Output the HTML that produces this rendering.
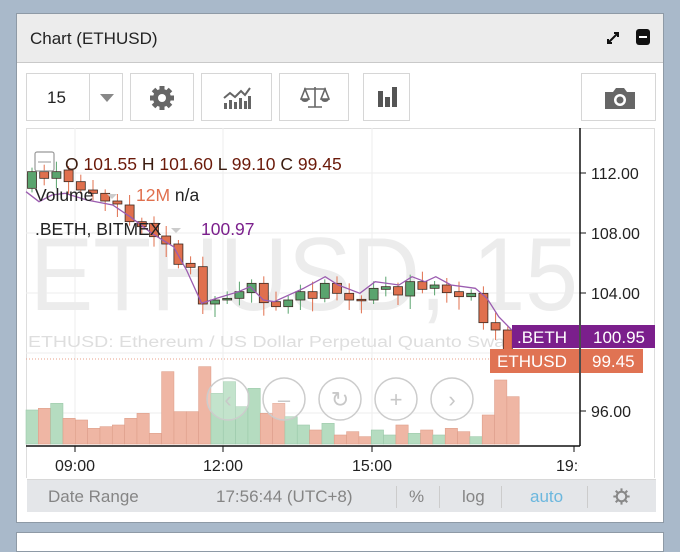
<!DOCTYPE html>
<html><head><meta charset="utf-8">
<style>
*{margin:0;padding:0;box-sizing:border-box}
body{width:680px;height:541px;background:#a9b9ca;font-family:"Liberation Sans",sans-serif;position:relative;overflow:hidden}
.panel{position:absolute;left:16px;top:13px;width:648px;height:510px;background:#fff;border:1px solid #8e9aa6}
.hdr{position:absolute;left:0;top:0;width:646px;height:49px;background:#ececec;border-bottom:1px solid #c9c9c9}
.hdr .t{position:absolute;left:13px;top:15px;font-size:17px;color:#222}
.btn{position:absolute;top:59px;height:48px;border:1px solid #d6d6d6;background:#fff}
.foot{position:absolute;left:10px;top:465px;width:629px;height:33px;background:#e4e6e9;border-top:1px solid #d8d8d8;font-size:17px;color:#858585}
.foot span{position:absolute;top:7px}
.sep{position:absolute;top:6px;width:1px;height:22px;background:#ccc}
.bot{position:absolute;left:16px;top:532px;width:648px;height:20px;background:#fff;border:1px solid #8e9aa6}
</style></head><body>
<div class="panel">
 <div class="hdr"><div class="t">Chart (ETHUSD)</div>
  <svg style="position:absolute;left:588px;top:16px" width="16" height="16" viewBox="0 0 16 16"><path d="M3 13L13 3M9 3h4v4M3 9v4h4" stroke="#111" stroke-width="2" fill="none"/></svg>
  <div style="position:absolute;left:619px;top:15px;width:14px;height:16px;background:#111;border-radius:3px"><div style="position:absolute;left:3px;top:7px;width:8px;height:2px;background:#fff"></div></div>
 </div>
 <div class="btn" style="left:9px;width:97px"><span style="position:absolute;left:20px;top:14px;font-size:17px;color:#222">15</span><div style="position:absolute;left:62px;top:0;width:1px;height:46px;background:#d6d6d6"></div><div style="position:absolute;left:73px;top:20px;border-left:7px solid transparent;border-right:7px solid transparent;border-top:8px solid #888"></div></div>
 <div class="btn" style="left:113px;width:64px"><svg style="position:absolute;left:17px;top:10px" width="28" height="28" viewBox="0 0 28 28"><g fill="#666"><circle cx="14" cy="14" r="9"/><g stroke="#666" stroke-width="5"><path d="M14 2v24M2 14h24M5.5 5.5l17 17M22.5 5.5l-17 17"/></g></g><circle cx="14" cy="14" r="4" fill="#fff"/></svg></div>
 <div class="btn" style="left:184px;width:71px"><svg style="position:absolute;left:20px;top:12px" width="30" height="24" viewBox="0 0 30 24"><path d="M2 12l6-5 5 4 6-6 4 4 5-7" stroke="#666" stroke-width="2" fill="none"/><g fill="#666"><rect x="2" y="17" width="3" height="6"/><rect x="7" y="14" width="3" height="9"/><rect x="12" y="16" width="3" height="7"/><rect x="17" y="12" width="3" height="11"/><rect x="22" y="15" width="3" height="8"/><rect x="26" y="10" width="3" height="13"/></g></svg></div>
 <div class="btn" style="left:262px;width:70px"><svg style="position:absolute;left:20px;top:11px" width="30" height="26" viewBox="0 0 30 26"><path d="M15 2v20M4 4h22M8 22h14M5 4l-4 10h8zM25 4l-4 10h8z" stroke="#666" stroke-width="1.6" fill="none"/><path d="M1 14a4 3 0 0 0 8 0zM21 14a4 3 0 0 0 8 0z" fill="#666"/></svg></div>
 <div class="btn" style="left:346px;width:47px"><svg style="position:absolute;left:12px;top:11px" width="24" height="24" viewBox="0 0 24 24"><g fill="#555"><rect x="2" y="6" width="5" height="16"/><rect x="9" y="12" width="5" height="10"/><rect x="16" y="2" width="5" height="20"/></g></svg></div>
 <div class="btn" style="left:564px;width:75px"><svg style="position:absolute;left:21px;top:12px" width="34" height="24" viewBox="0 0 34 24"><path d="M2 6h8l3-4h8l3 4h8v17H2z" fill="#666"/><circle cx="17" cy="14" r="6" fill="#fff"/><circle cx="17" cy="14" r="3.5" fill="#666"/></svg></div>
 <div class="foot">
  <span style="left:21px">Date Range</span>
  <span style="left:189px">17:56:44 (UTC+8)</span>
  <div class="sep" style="left:369px"></div>
  <span style="left:382px">%</span>
  <div class="sep" style="left:412px"></div>
  <span style="left:435px">log</span>
  <div class="sep" style="left:474px"></div>
  <span style="left:503px;color:#6bb7de">auto</span>
  <div class="sep" style="left:560px"></div>
  <svg style="position:absolute;left:585px;top:7px" width="19" height="19" viewBox="0 0 28 28"><g stroke="#888" stroke-width="3" fill="none"><circle cx="14" cy="14" r="7"/><path d="M14 2v5M14 21v5M2 14h5M21 14h5M5.5 5.5l3.5 3.5M19 19l3.5 3.5M22.5 5.5L19 9M9 19l-3.5 3.5"/></g></svg>
 </div>
</div>
<div class="bot"></div>
<svg id="c" style="position:absolute;left:0;top:0" width="680" height="541" font-family="Liberation Sans, sans-serif"></svg>
<script>
var s=document.getElementById('c'),h='';
h+='<defs><clipPath id="cl"><rect x="0" y="0" width="579" height="541"/></clipPath></defs>';
h+='<rect x="26" y="128" width="629" height="1" fill="#ddd"/><rect x="654" y="128" width="1" height="350" fill="#ddd"/><rect x="26" y="128" width="1" height="350" fill="#ddd"/>';
[173,233,293,353,413].forEach(function(y){h+='<line x1="26" x2="580" y1="'+y+'" y2="'+y+'" stroke="#eee"/>';});
[75,223,372].forEach(function(x){h+='<line x1="'+x+'" x2="'+x+'" y1="128" y2="446" stroke="#eee"/>';});
h+='<text x="30" y="310" font-size="104" fill="#ececec" textLength="548" lengthAdjust="spacingAndGlyphs">ETHUSD, 15</text>';
h+='<text x="28" y="347" font-size="15.5" fill="#dedede" textLength="488" lengthAdjust="spacingAndGlyphs">ETHUSD: Ethereum / US Dollar Perpetual Quanto Swap</text>';
h+='<line x1="26" x2="580" y1="359" y2="359" stroke="#e8a08a" stroke-dasharray="1,2"/>';
var vt=[180,175,160,205,210,235,230,225,205,190,250,65,185,185,50,130,95,170,115,190,160,200,225,240,220,255,245,260,240,255,225,250,240,255,235,245,260,195,90,140];
var cd=[[125,175,1],[125,145,0],[125,145,1],[120,155,0],[155,180,0],[180,190,0],[190,213,0],[213,222,0],[225,275,0],[275,290,0],[280,320,0],[318,342,0],[342,403,0],[400,412,0],[410,522,0],[510,522,1],[505,510,1],[485,505,1],[460,488,1],[460,518,0],[515,530,0],[510,530,1],[485,510,1],[485,505,0],[460,505,1],[460,490,0],[490,510,0],[508,511,0],[475,510,1],[470,478,1],[470,495,0],[455,498,1],[455,478,0],[465,475,1],[465,488,0],[485,500,0],[490,500,1],[490,578,0],[578,600,0],[600,690,0]];
for(var i=0;i<40;i++){var x=26+i*12.33;var t=350+vt[i]/3;var g=cd[i][2];
h+='<rect x="'+x+'" y="'+t+'" width="12.3" height="'+(444-t)+'" fill="'+(g?'#b5dcc0':'#efb6a4')+'" stroke="'+(g?'#9cc9aa':'#de9f8b')+'" stroke-width="0.6"/>';}
for(var i=0;i<40;i++){var cx=32+i*12.2;var a=130+cd[i][0]/3,b=130+cd[i][1]/3;var g=cd[i][2];var col=g?'#5aa46e':'#e0704e';
h+='<line x1="'+cx+'" x2="'+cx+'" y1="'+(a-4-(i%3)*3)+'" y2="'+(b+4+(i%4)*3)+'" stroke="'+col+'"/>';
h+='<rect x="'+(cx-4.5)+'" y="'+a+'" width="9" height="'+Math.max(1.5,b-a)+'" fill="'+col+'" stroke="#3a2a22" stroke-width="0.8"/>';}
var pl=[[60,185],[90,215],[120,195],[150,190],[200,210],[260,225],[300,260],[350,310],[400,350],[430,420],[465,520],[500,505],[550,485],[577,470],[607,510],[632,515],[700,475],[750,440],[780,465],[830,490],[865,455],[920,465],[950,440],[980,455],[1005,440],[1040,465],[1096,475],[1123,505],[1150,560],[1180,600]];
h+='<polyline fill="none" stroke="#9b5cb0" stroke-width="1.3" points="'+pl.map(function(p){return (p[0]/2.306).toFixed(1)+','+(130+p[1]/3).toFixed(1)}).join(' ')+'"/>';
[228,284,340,396,452].forEach(function(x,k){h+='<circle cx="'+x+'" cy="399" r="21" fill="rgba(255,255,255,0.2)" stroke="#cccccc" stroke-width="1.5"/>';
h+='<text x="'+x+'" y="407" font-size="22" fill="#c8c8c8" text-anchor="middle">'+['‹','–','↻','+','›'][k]+'</text>';});
h+='<line x1="580" x2="580" y1="128" y2="446" stroke="#111" stroke-width="1.5"/><line x1="26" x2="580" y1="446" y2="446" stroke="#111" stroke-width="1.5"/>';
[173,233,293,411].forEach(function(y,k){h+='<line x1="580" x2="586" y1="'+y+'" y2="'+y+'" stroke="#111"/><text x="591" y="'+(y+6)+'" font-size="16" fill="#222">'+['112.00','108.00','104.00','96.00'][k]+'</text>';});
[75,223,372,574].forEach(function(x,k){h+='<line x1="'+x+'" x2="'+x+'" y1="446" y2="452" stroke="#111"/>';});
h+='<g clip-path="url(#cl)"><text x="75" y="471" font-size="16" fill="#222" text-anchor="middle">09:00</text><text x="223" y="471" font-size="16" fill="#222" text-anchor="middle">12:00</text><text x="372" y="471" font-size="16" fill="#222" text-anchor="middle">15:00</text><text x="556" y="471" font-size="16" fill="#222">19:00</text></g>';
h+='<rect x="512" y="325" width="67" height="23" fill="#7b1f8c"/><text x="517" y="343" font-size="17" fill="#fff">.BETH</text><rect x="581" y="325" width="74" height="23" fill="#7b1f8c"/><text x="593" y="343" font-size="17" fill="#fff">100.95</text>';
h+='<rect x="490" y="349" width="89" height="24" fill="#e07353"/><text x="497" y="367" font-size="17" fill="#fff">ETHUSD</text><rect x="581" y="349" width="62" height="24" fill="#e07353"/><text x="592" y="367" font-size="17" fill="#fff">99.45</text>';
h+='<rect x="35" y="152" width="19" height="19" fill="none" stroke="#999" stroke-width="1.2" rx="2"/><line x1="38" x2="51" y1="162" y2="162" stroke="#999"/>';
h+='<text x="65" y="170" font-size="17.5" fill="#3a1c10">O <tspan fill="#6b1a0a">101.55</tspan> H <tspan fill="#6b1a0a">101.60</tspan> L <tspan fill="#6b1a0a">99.10</tspan> C <tspan fill="#6b1a0a">99.45</tspan></text>';
h+='<text x="35" y="201" font-size="17.5" fill="#222">Volume</text><path d="M107 194l5 5 5-5z" fill="#ccc"/><text x="136" y="201" font-size="17.5" fill="#e0704e">12M <tspan fill="#222">n/a</tspan></text>';
h+='<text x="35" y="235" font-size="17.5" fill="#222">.BETH, BITMEX</text><path d="M171 228l5 5 5-5z" fill="#ccc"/><text x="201" y="235" font-size="17.5" fill="#7b1f8c">100.97</text>';
s.innerHTML=h;
</script>
</body></html>
